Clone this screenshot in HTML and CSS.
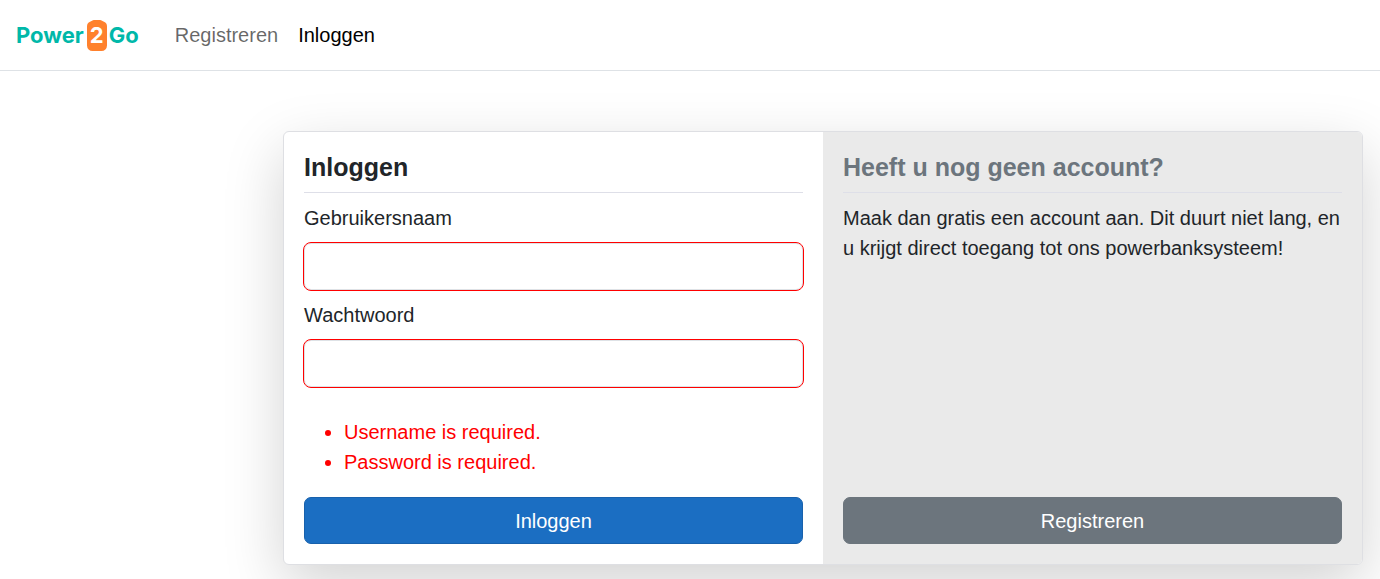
FILE: index.html
```html
<!DOCTYPE html>
<html lang="nl">
<head>
  <meta charset="utf-8">
  <meta name="viewport" content="width=device-width, initial-scale=1">
  <title>Inloggen - Power2Go</title>
  <link rel="stylesheet" href="styles.css">
</head>
<body>
  <header class="navbar">
    <a class="brand" href="#" aria-label="Power2Go">
      <span>Power</span>
      <span class="brand-badge">
        <svg class="brand-shape" viewBox="0 0 20 31" aria-hidden="true"><path d="M7 0h6c1.500 0 2.500 1.200 4 1.800C19 2.700 20 4.200 20 6.500V25.500a5.500 5.500 0 0 1-5.500 5.500h-9A5.500 5.500 0 0 1 0 25.500V6.500C0 4.200 1 2.700 3 1.800 4.500 1.200 5.500 0 7 0z" fill="#ff812d"/></svg>
        <span class="brand-digit">2</span>
      </span>
      <span>Go</span>
    </a>
    <nav class="nav-links">
      <a class="nav-link" href="#">Registreren</a>
      <a class="nav-link active" href="#" aria-current="page">Inloggen</a>
    </nav>
  </header>
  <main class="page">
    <div class="card">
      <form class="panel">
        <h1 class="panel-title">Inloggen</h1>
        <label class="field-label" for="username">Gebruikersnaam</label>
        <input class="field-input" id="username" type="text" aria-invalid="true">
        <label class="field-label" for="password">Wachtwoord</label>
        <input class="field-input" id="password" type="password" aria-invalid="true">
        <ul class="errors">
          <li>Username is required.</li>
          <li>Password is required.</li>
        </ul>
        <button class="button button-primary" type="button">Inloggen</button>
      </form>
      <section class="panel panel-muted">
        <h2 class="panel-title">Heeft u nog geen account?</h2>
        <p class="panel-text">Maak dan gratis een account aan. Dit duurt niet lang, en u krijgt direct toegang tot ons powerbanksysteem!</p>
        <button class="button button-secondary" type="button">Registreren</button>
      </section>
    </div>
  </main>
</body>
</html>
```
FILE: styles.css
```css
* {
  box-sizing: border-box;
}

body {
  min-height: 100vh;
  margin: 0;
  background: #fff;
  color: #212529;
  font: 20px/30px "Liberation Sans", Arial, sans-serif;
}

.navbar {
  display: flex;
  align-items: center;
  gap: 36px;
  padding: 20px 16px;
  border-bottom: 1px solid #dee2e6;
}

.brand {
  display: flex;
  align-items: center;
  gap: 2px;
  height: 30px;
  color: #00b8a9;
  font: 700 22px/30px Inter, sans-serif;
  text-decoration: none;
}

.brand-badge {
  display: grid;
  place-items: center;
  padding-left: 1px;
  color: #fff;
}

.brand-shape,
.brand-digit {
  grid-area: 1 / 1;
}

.brand-shape {
  width: 20px;
  height: 31px;
}

.nav-links {
  display: flex;
  gap: 20px;
}

.nav-link {
  color: rgba(0, 0, 0, 0.6);
  text-decoration: none;
}

.nav-link.active {
  color: #000;
}

.page {
  padding: 60px 17px 0 283px;
}

.card {
  display: grid;
  grid-template-columns: 1fr 1fr;
  overflow: hidden;
  border: 1px solid #dedfe3;
  border-radius: 6px;
  background: #fff;
  box-shadow: 0 20px 60px rgba(0, 0, 0, 0.175);
}

.panel {
  display: flex;
  flex-direction: column;
  padding: 20px;
}

.panel-muted {
  background: #eaeaea;
}

.panel-title {
  margin: 0 0 10px;
  padding-bottom: 10px;
  border-bottom: 1px solid #dedfe8;
  font-size: 25px;
  line-height: 30px;
}

.panel-muted .panel-title {
  color: #6c757d;
}

.panel-text {
  margin: 0;
}

.field-label {
  margin-bottom: 10px;
}

.field-input {
  width: 100%;
  height: 47px;
  margin: 0 0 10px;
  padding: 8px 15px;
  border: 1px solid #dee2e6;
  border-radius: 7px;
  outline: 1px solid #f00;
  background: #fff;
  color: inherit;
  font: inherit;
}

.errors {
  margin: 20px 0;
  padding-left: 40px;
  color: #f00;
}

.button {
  width: 100%;
  margin-top: auto;
  padding: 8px 15px 7px;
  border: 1px solid;
  border-radius: 7px;
  color: #fff;
  font: inherit;
  cursor: pointer;
}

.button-primary {
  border-color: #1861ac;
  background: #1b6ec2;
}

.button-secondary {
  border-color: #6c757d;
  background: #6c757d;
}
```
